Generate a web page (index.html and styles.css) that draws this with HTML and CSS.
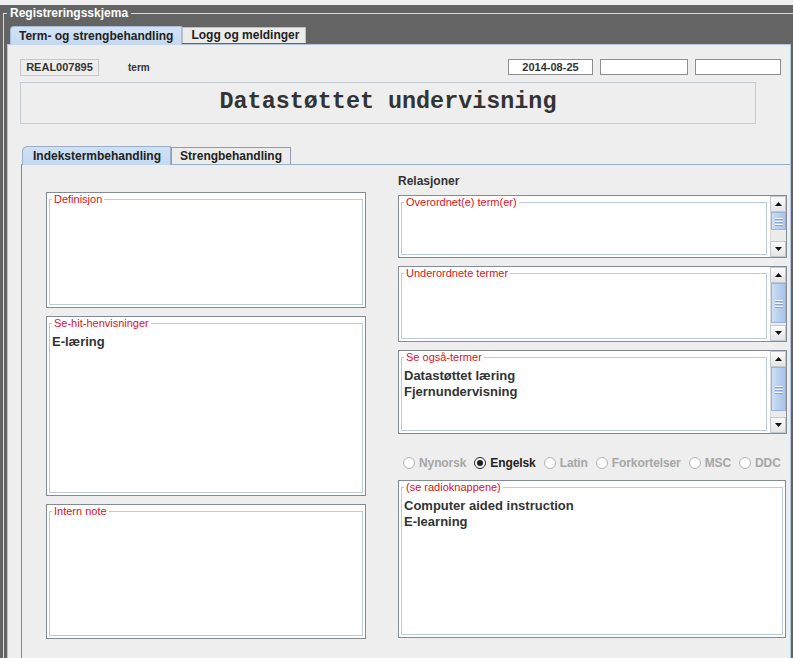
FILE: index.html
```html
<!DOCTYPE html>
<html lang="no">
<head>
<meta charset="utf-8">
<title>Registreringsskjema</title>
<link rel="stylesheet" href="styles.css">
</head>
<body>
<div class="frame">
  <fieldset class="outer">
    <legend>Registreringsskjema</legend>
    <div class="tabs">
      <div class="tab sel">Term- og strengbehandling</div>
      <div class="tab">Logg og meldinger</div>
    </div>
    <div class="panel">
      <div class="hdr">
        <span class="idbox">REAL007895</span>
        <span class="type">term</span>
        <span class="spacer"></span>
        <span class="datebox">2014-08-25</span>
        <span class="field f1"></span>
        <span class="field f2"></span>
      </div>
      <div class="titlebox">Datastøttet undervisning</div>
      <div class="itabs">
        <div class="itab sel">Indekstermbehandling</div>
        <div class="itab">Strengbehandling</div>
      </div>
      <div class="ipanel">
        <div class="col left">
          <div class="box h-def">
            <fieldset class="fs"><legend>Definisjon</legend></fieldset>
          </div>
          <div class="box h-sehit">
            <fieldset class="fs"><legend>Se-hit-henvisninger</legend>
              <div class="val">E-læring</div>
            </fieldset>
          </div>
          <div class="box h-note">
            <fieldset class="fs"><legend>Intern note</legend></fieldset>
          </div>
        </div>
        <div class="col right">
          <div class="rel">Relasjoner</div>
          <div class="box h-over">
            <fieldset class="fs"><legend>Overordnet(e) term(er)</legend></fieldset>
            <div class="sb">
              <div class="sbtn"><svg width="7" height="4" viewBox="0 0 7 4"><path d="M0 4 L3.5 0 L7 4 Z" fill="#111"/></svg></div>
              <div class="track">
                <div class="thumb" style="height:18px"><i></i><i></i><i></i></div>
              </div>
              <div class="sbtn"><svg width="7" height="4" viewBox="0 0 7 4"><path d="M0 0 L7 0 L3.5 4 Z" fill="#111"/></svg></div>
            </div>
          </div>
          <div class="box h-under">
            <fieldset class="fs"><legend>Underordnete termer</legend></fieldset>
            <div class="sb">
              <div class="sbtn"><svg width="7" height="4" viewBox="0 0 7 4"><path d="M0 4 L3.5 0 L7 4 Z" fill="#111"/></svg></div>
              <div class="track">
                <div class="thumb" style="height:40px"><i></i><i></i><i></i></div>
              </div>
              <div class="sbtn"><svg width="7" height="4" viewBox="0 0 7 4"><path d="M0 0 L7 0 L3.5 4 Z" fill="#111"/></svg></div>
            </div>
          </div>
          <div class="box h-also">
            <fieldset class="fs"><legend>Se også-termer</legend>
              <div class="val">Datastøttet læring</div>
              <div class="val">Fjernundervisning</div>
            </fieldset>
            <div class="sb">
              <div class="sbtn"><svg width="7" height="4" viewBox="0 0 7 4"><path d="M0 4 L3.5 0 L7 4 Z" fill="#111"/></svg></div>
              <div class="track">
                <div class="thumb" style="height:44px"><i></i><i></i><i></i></div>
              </div>
              <div class="sbtn"><svg width="7" height="4" viewBox="0 0 7 4"><path d="M0 0 L7 0 L3.5 4 Z" fill="#111"/></svg></div>
            </div>
          </div>
          <div class="radios">
            <label class="radio off"><span class="dot"></span>Nynorsk</label>
            <label class="radio on"><span class="dot"></span>Engelsk</label>
            <label class="radio off"><span class="dot"></span>Latin</label>
            <label class="radio off"><span class="dot"></span>Forkortelser</label>
            <label class="radio off"><span class="dot"></span>MSC</label>
            <label class="radio off"><span class="dot"></span>DDC</label>
          </div>
          <div class="box h-lang">
            <fieldset class="fs"><legend>(se radioknappene)</legend>
              <div class="val">Computer aided instruction</div>
              <div class="val">E-learning</div>
            </fieldset>
          </div>
        </div>
      </div>
    </div>
  </fieldset>
</div>
</body>
</html>
```
FILE: styles.css
```css
* { box-sizing: border-box; }
html, body {
  margin: 0;
  padding: 0;
  height: 658px;
  overflow: hidden;
  background: #eeeeee;
  font-family: "Liberation Sans", Arial, sans-serif;
  color: #333333;
}
.frame {
  margin-top: 5px;
  padding-top: 1px;
  background: #646464;
  height: 653px;
  overflow: hidden;
}
.outer {
  margin: 0 0 0 3px;
  border: 1px solid #d4dbe3;
  border-right: 0;
  border-bottom: 0;
  padding: 0 2px 0 3px;
  height: 700px;
  min-width: 0;
}
.outer > legend {
  color: #ffffff;
  font-weight: bold;
  font-size: 12px;
  line-height: 14px;
  padding: 0 3px 0 3px;
  margin-left: 0;
}
.tabs {
  margin-top: 5px;
  padding-left: 3px;
  display: flex;
  align-items: flex-end;
  height: 19px;
}
.tab {
  font-size: 12px;
  font-weight: bold;
  color: #222;
  height: 16px;
  line-height: 15px;
  padding: 0 6px 0 8px;
  background: #ececec;
  border: 1px solid #b7c0cb;
  border-bottom: 0;
  margin-bottom: 1px;
}
.tab.sel {
  height: 19px;
  line-height: 18px;
  padding: 0 8px 0 8px;
  background: linear-gradient(#d3e3f5, #c4d9ef);
  border-color: #a8bcd4;
  border-top-left-radius: 4px;
  margin-bottom: -1px;
  position: relative;
  z-index: 1;
}
.panel {
  background: #eeeeee;
  border: 1px solid #b3c6dc;
  border-bottom: 0;
  height: 640px;
}
.hdr {
  display: flex;
  align-items: flex-start;
  padding: 14px 9px 0 12px;
  height: 31px;
}
.idbox {
  width: 79px;
  height: 17px;
  border: 1px solid #c4c8cc;
  font-size: 11px;
  font-weight: bold;
  line-height: 15px;
  text-align: center;
}
.type {
  margin-left: 29px;
  font-size: 10px;
  font-weight: bold;
  line-height: 17px;
}
.spacer { flex: 1; }
.datebox {
  width: 85px;
  height: 16px;
  background: #fff;
  border: 1px solid #8e8e8e;
  font-size: 11px;
  font-weight: bold;
  line-height: 14px;
  text-align: center;
}
.field {
  height: 16px;
  background: #fff;
  border: 1px solid #8e8e8e;
  margin-left: 7px;
}
.f1 { width: 88px; }
.f2 { width: 86px; }
.titlebox {
  margin: 6px 0 0 12px;
  width: 736px;
  height: 42px;
  border: 1px solid #c3cbd4;
  font-family: "Liberation Mono", "Courier New", monospace;
  font-size: 23.4px;
  font-weight: bold;
  color: #333;
  line-height: 38px;
  text-align: center;
}
.itabs {
  margin: 21px 0 0 13px;
  padding-left: 1px;
  display: flex;
  align-items: flex-end;
  height: 19px;
}
.itab {
  font-size: 12px;
  font-weight: bold;
  color: #222;
  height: 17px;
  line-height: 16px;
  padding: 0 8px 0 8px;
  background: #ececec;
  border: 1px solid #8d9ab0;
  border-bottom: 0;
}
.itab.sel {
  height: 19px;
  line-height: 18px;
  padding: 0 9px 0 10px;
  background: linear-gradient(#cfe0f3, #c5d9ef);
  border-color: #9cafc8;
  border-top-left-radius: 6px 5px;
  position: relative;
  z-index: 1;
  margin-bottom: -1px;
}
.ipanel {
  border-top: 1px solid #9aadc6;
  border-left: 1px solid #7383cc;
  margin-left: 13px;
  display: grid;
  grid-template-columns: 320px 389px;
  column-gap: 32px;
  padding-left: 24px;
  height: 500px;
}
.col { display: flex; flex-direction: column; }
.col.left { padding-top: 27px; gap: 8px; }
.col.right { padding-top: 9px; }
.rel {
  font-size: 12px;
  font-weight: bold;
  line-height: 15px;
  height: 15px;
  margin-bottom: 6px;
}
.box {
  border: 1px solid #858b93;
  background: #fff;
  display: flex;
  flex: none;
}
.h-def { height: 116px; }
.h-sehit { height: 180px; }
.h-note { height: 135px; }
.h-over { height: 63px; }
.h-under { height: 76px; margin-top: 8px; }
.h-also { height: 84px; margin-top: 8px; }
.h-lang { height: 158px; width: 388px; margin-top: 8px; }
.fs {
  flex: 1;
  margin: 0 2px 2px 2px;
  border: 1px solid #bccbda;
  padding: 0 2px;
  min-width: 0;
}
.fs > legend {
  color: #e0101c;
  font-size: 11px;
  line-height: 13px;
  padding: 0 2px;
  margin-left: 0;
}
.val {
  font-size: 13px;
  font-weight: bold;
  line-height: 16px;
  color: #333;
}
.fs > legend + .val { margin-top: 4px; }
.sb {
  width: 16px;
  margin-left: 1px;
  display: flex;
  flex-direction: column;
  background: #ebebeb;
}
.sbtn {
  height: 16px;
  flex: none;
  border: 1px solid #c2c8d0;
  background: linear-gradient(#fbfbfb, #e4e4e4);
  display: flex;
  align-items: center;
  justify-content: center;
}
.track {
  flex: 1;
  background: #ececec;
  border-left: 1px solid #dcdcdc;
}
.thumb {
  border: 1px solid #9ab2d8;
  background: linear-gradient(90deg, #cfe0f6, #b8cfee 50%, #a9c3ea);
  display: flex;
  flex-direction: column;
  align-items: center;
  justify-content: center;
  gap: 2px;
}
.thumb i {
  display: block;
  width: 8px;
  height: 1px;
  background: #f4f8fd;
  box-shadow: 0 1px 0 #8aa4cc;
}
.radios {
  display: flex;
  align-items: center;
  gap: 8px;
  margin-top: 20px;
  padding-left: 5px;
  height: 18px;
}
.radio {
  display: flex;
  align-items: center;
  gap: 4px;
  font-size: 12px;
  font-weight: bold;
  letter-spacing: -0.1px;
}
.radio.off { color: #a6a6a6; }
.radio.on { color: #222; }
.dot {
  width: 12px;
  height: 12px;
  border-radius: 50%;
  border: 1px solid #b4b4b4;
  background: #fff;
  display: flex;
  align-items: center;
  justify-content: center;
}
.radio.on .dot {
  border-color: #2b2b2b;
  background: #f2f2f2;
}
.radio.on .dot::after {
  content: "";
  width: 6px;
  height: 6px;
  border-radius: 50%;
  background: #1e1e1e;
}
```
